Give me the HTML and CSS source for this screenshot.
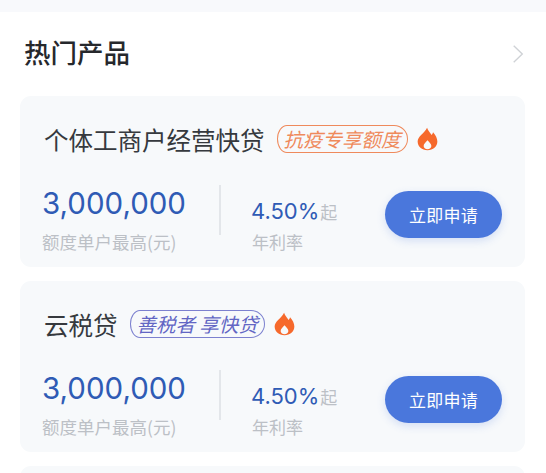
FILE: index.html
```html
<!DOCTYPE html>
<html lang="zh-CN">
<head>
<meta charset="utf-8">
<title>热门产品</title>
<link rel="stylesheet" href="styles.css">
</head>
<body>
<div class="topband"></div>
<section class="products">
  <header class="head">
    <h2>热门产品</h2>
    <svg class="chev" viewBox="0 0 14 22" aria-hidden="true"><path d="M2 1.500 L12 11 L2 20.500"/></svg>
  </header>
  <article class="card">
    <div class="title-row">
      <h3>个体工商户经营快贷</h3>
      <span class="tag tag-orange">抗疫专享额度</span>
      <svg class="fire" viewBox="0 0 24 28" aria-hidden="true"><path fill-rule="evenodd" d="M11.500 1C12.500 4.500 15 6.800 16.800 9.200 17.600 8.300 18.200 7.300 18.500 6 21.500 9.200 23.500 13 23.500 17 23.500 23 18.500 27 12 27S.5 23 .5 17C.5 11 8.500 7.500 11.500 1ZM12 15.500C9.800 18 7.500 19.800 7.500 22.300 7.500 24.600 9.500 26 12 26S16.500 24.600 16.500 22.300C16.500 19.800 14.200 18 12 15.500Z"/></svg>
    </div>
    <div class="stats">
      <div class="amount">
        <div class="big">3,000,000</div>
        <div class="sub">额度单户最高(元)</div>
      </div>
      <div class="rate">
        <div class="rate-val">4.50%<small>起</small></div>
        <div class="sub">年利率</div>
      </div>
      <button class="apply">立即申请</button>
    </div>
  </article>
  <article class="card">
    <div class="title-row">
      <h3>云税贷</h3>
      <span class="tag tag-blue">善税者 享快贷</span>
      <svg class="fire" viewBox="0 0 24 28" aria-hidden="true"><path fill-rule="evenodd" d="M11.500 1C12.500 4.500 15 6.800 16.800 9.200 17.600 8.300 18.200 7.300 18.500 6 21.500 9.200 23.500 13 23.500 17 23.500 23 18.500 27 12 27S.5 23 .5 17C.5 11 8.500 7.500 11.500 1ZM12 15.500C9.800 18 7.500 19.800 7.500 22.300 7.500 24.600 9.500 26 12 26S16.500 24.600 16.500 22.300C16.500 19.800 14.200 18 12 15.500Z"/></svg>
    </div>
    <div class="stats">
      <div class="amount">
        <div class="big">3,000,000</div>
        <div class="sub">额度单户最高(元)</div>
      </div>
      <div class="rate">
        <div class="rate-val">4.50%<small>起</small></div>
        <div class="sub">年利率</div>
      </div>
      <button class="apply">立即申请</button>
    </div>
  </article>
  <div class="card card-next"></div>
</section>
</body>
</html>
```
FILE: styles.css
```css
* { box-sizing: border-box; }
html, body { margin: 0; padding: 0; }
body {
  width: 546px;
  height: 473px;
  overflow: hidden;
  background: #fff;
  font-family: "Inter", "Noto Sans CJK SC", sans-serif;
}
.topband { height: 12px; background: #f8f9fc; }
.products { padding: 0 21px 0 20px; }
.head {
  height: 84px;
  padding: 0 1px 4px 4px;
  display: flex;
  align-items: center;
  justify-content: space-between;
}
.head h2 {
  margin: 0;
  font-size: 26.500px;
  font-weight: 500;
  line-height: 36px;
  color: #26282c;
  font-family: "Noto Sans CJK SC", sans-serif;
}
.chev { width: 12px; height: 20px; margin-top: 3px; }
.chev path { fill: none; stroke: #cfd2d6; stroke-width: 1.6; }
.card {
  height: 171px;
  margin-bottom: 14px;
  padding: 24px 23px 0 22px;
  background: #f7f9fb;
  border-radius: 11px;
}
.title-row { display: flex; align-items: center; height: 38px; padding-left: 2px; }
.title-row h3 {
  margin: 0;
  font-size: 24.500px;
  font-weight: 400;
  color: #36393e;
  white-space: nowrap;
  font-family: "Noto Sans CJK SC", sans-serif;
}
.tag {
  margin-left: 12px;
  height: 28px;
  line-height: 25px;
  padding: 0 6px;
  border: 1px solid;
  border-radius: 10px 14px 14px 10px / 14px;
  font-size: 19.500px;
  font-style: italic;
  white-space: nowrap;
  font-family: "Noto Sans CJK SC", sans-serif;
}
.tag-orange { color: #ef8a5c; border-color: #ef8a5c; }
.tag-blue { color: #6266c4; border-color: #7c80cf; }
.fire { width: 21px; height: 24px; margin-left: 9px; fill: #f6692c; }
.stats { display: flex; align-items: flex-start; margin-top: 27px; }
.amount {
  width: 179px;
  height: 50px;
  border-right: 2px solid #e3e6ea;
}
.big {
  font-size: 29.500px;
  line-height: 36px;
  color: #2f5bb5;
  white-space: nowrap;
  font-family: "Inter", sans-serif;
  font-weight: 400;
}
.sub {
  font-size: 17.500px;
  line-height: 22px;
  color: #bcc0c6;
  margin-top: 10px;
  white-space: nowrap;
  font-family: "Noto Sans CJK SC", sans-serif;
}
.rate { margin-left: 31px; width: 133px; padding-top: 12px; }
.rate .sub { margin-top: 5px; font-size: 17px; }
.rate-val {
  font-size: 22px;
  line-height: 28px;
  margin-left: -1px;
  color: #2f5bb5;
  white-space: nowrap;
}
.rate-val small {
  font-size: 17px;
  margin-left: 1px;
  color: #bcc0c6;
  font-family: "Noto Sans CJK SC", sans-serif;
}
.apply {
  width: 117px;
  height: 47px;
  margin-top: 6px;
  border: 0;
  padding: 0;
  border-radius: 24px;
  background: #4a77dc;
  color: #fff;
  font-size: 17px;
  font-weight: 400;
  letter-spacing: .3px;
  font-family: "Noto Sans CJK SC", sans-serif;
  box-shadow: 0 3px 8px rgba(74, 119, 220, .2);
}
.card-next { height: 40px; margin: 0; }
```
